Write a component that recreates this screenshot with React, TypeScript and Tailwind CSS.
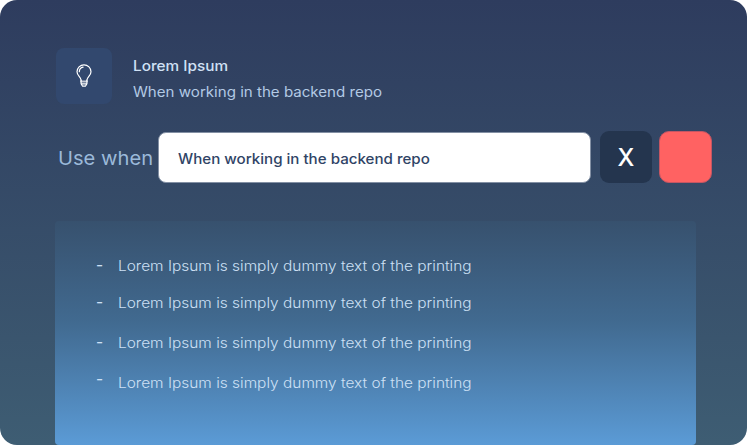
const tips = [
  { text: 'Lorem Ipsum is simply dummy text of the printing', row: 'h-[37px]', dash: '' },
  { text: 'Lorem Ipsum is simply dummy text of the printing', row: 'h-10', dash: '' },
  { text: 'Lorem Ipsum is simply dummy text of the printing', row: 'h-10', dash: '' },
  { text: 'Lorem Ipsum is simply dummy text of the printing', row: 'h-10', dash: '-mt-[3px]' },
];

function BulbIcon() {
  return (
    <svg width="16" height="24" viewBox="0 0 16 24" fill="none" stroke="#fff" strokeWidth="1.2" strokeLinecap="round">
      <path d="M5.1 16.2C5.1 13.4 1 11.7 1 7.8a7 7 0 0 1 14 0c0 3.900-4.100 5.600-4.100 8.400" />
      <path d="M3.300 7.700a4.700 4.700 0 0 1 3.800-4.500" />
      <path d="M5.100 16.200v3.600l1.500 2.400h2.800l1.500-2.400v-3.600M5.100 19.800h5.800" />
      <path d="M5.100 17.600h5.800" strokeWidth="2" opacity=".7" />
    </svg>
  );
}

export default function App() {
  return (
    <main className="flex h-[445px] w-[747px] flex-col overflow-hidden rounded-[17px] bg-linear-to-b from-[#2e3c5e] to-[#3e5d73] pt-12 font-['Inter',sans-serif]">
      <header className="ml-14 flex h-14 gap-[21px]">
        <div className="flex size-14 items-center justify-center rounded-lg bg-[#32486e]">
          <BulbIcon />
        </div>
        <div className="flex flex-col items-start pt-[5px] text-sm leading-[26px] whitespace-nowrap">
          <h1 className="origin-left scale-x-[1.095] font-medium text-[#d0e1f5]">Lorem Ipsum</h1>
          <p className="origin-left scale-x-[1.078] text-[#b3cae5]">When working in the backend repo</p>
        </div>
      </header>

      <section className="mt-[27px] ml-[58px] flex h-[52px] items-start">
        <label className="w-[100px] pt-[3px] text-[19px] leading-[50px] whitespace-nowrap text-[#9bb9d9]">
          <span className="inline-block origin-left scale-x-[1.06]">Use when</span>
        </label>
        <div className="mt-[1px] flex h-[51px] w-[433px] items-center rounded-lg border border-[#8390a4] bg-white pt-[3px] pl-[18.500px] text-sm font-medium whitespace-nowrap text-[#304466]">
          <span className="origin-left scale-x-[1.080]">When working in the backend repo</span>
        </div>
        <button className="ml-[9px] flex h-[52px] w-[52px] items-center justify-center rounded-[9px] bg-[#24354e] pt-0.5 text-2xl font-medium text-white">X</button>
        <button aria-label="Delete" className="ml-[7px] h-[52px] w-[53px] rounded-[10px] border border-[#c45663] bg-[#ff6262]" />
      </section>

      <section className="mt-[38px] ml-[55px] h-[224px] w-[641px] rounded bg-linear-to-b from-[#37516e] via-[#416a90] via-45% to-[#5b9bd6] pt-[33px]">
        <ul className="pl-[42px] text-sm font-light text-[#cde0f5]">
          {tips.map((tip, i) => (
            <li key={i} className={`flex ${tip.row} leading-6 whitespace-nowrap`}>
              <span className={`w-[21px] ${tip.dash}`}>
                <span className="relative -top-px -left-px inline-block origin-left scale-x-110 font-medium">-</span>
              </span>
              <span className="h-6 origin-left scale-x-[1.103]">{tip.text}</span>
            </li>
          ))}
        </ul>
      </section>
    </main>
  );
}
